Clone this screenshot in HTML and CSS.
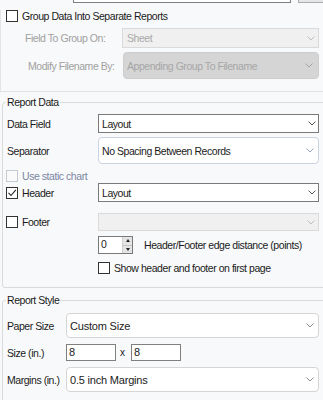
FILE: index.html
```html
<!DOCTYPE html>
<html>
<head>
<meta charset="utf-8">
<link rel="stylesheet" href="styles.css">
</head>
<body>
<div class="panel">
  <div class="top-row">
    <div class="top-input"></div>
    <div class="top-btn"></div>
  </div>

  <section class="group-sec">
    <div class="row chk-row">
      <span class="cb"></span><span class="txt">Group Data Into Separate Reports</span>
    </div>
    <div class="row field-row">
      <span class="dlabel lbl-field">Field To Group On:</span>
      <div class="combo disabled w-field">
        <span class="ctext">Sheet</span>
        <svg class="chev" width="8" height="5" viewBox="0 0 8 5"><polyline points="0.5,0.5 4,4 7.5,0.5"/></svg>
      </div>
    </div>
    <div class="row modify-row">
      <span class="dlabel lbl-modify">Modify Filename By:</span>
      <div class="combo grey w-modify">
        <span class="ctext">Appending Group To Filename</span>
        <svg class="chev" width="8" height="5" viewBox="0 0 8 5"><polyline points="0.5,0.5 4,4 7.5,0.5"/></svg>
      </div>
    </div>
  </section>

  <fieldset class="fs fs-data">
    <legend>Report Data</legend>
    <div class="row r-datafield">
      <span class="flabel w92">Data Field</span>
      <div class="combo dark w221">
        <span class="ctext">Layout</span>
        <svg class="chev" width="8" height="5" viewBox="0 0 8 5"><polyline points="0.5,0.5 4,4 7.5,0.5"/></svg>
      </div>
    </div>
    <div class="row r-separator">
      <span class="flabel w92">Separator</span>
      <div class="combo round blue w221">
        <span class="ctext">No Spacing Between Records</span>
        <svg class="chev" width="8" height="5" viewBox="0 0 8 5"><polyline points="0.5,0.5 4,4 7.5,0.5"/></svg>
      </div>
    </div>
    <div class="row r-static">
      <span class="cb cb-dis"></span><span class="txt txt-dis">Use static chart</span>
    </div>
    <div class="row r-header">
      <span class="chk-label w92"><span class="cb"><svg width="10" height="10" viewBox="0 0 10 10"><polyline class="tick" points="1.5,4.8 4,7.5 8.8,1.8"/></svg></span><span class="txt">Header</span></span>
      <div class="combo dark w221">
        <span class="ctext">Layout</span>
        <svg class="chev" width="8" height="5" viewBox="0 0 8 5"><polyline points="0.5,0.5 4,4 7.5,0.5"/></svg>
      </div>
    </div>
    <div class="row r-footer">
      <span class="chk-label w92"><span class="cb"></span><span class="txt">Footer</span></span>
      <div class="combo disabled w221">
        <span class="ctext"></span>
        <svg class="chev" width="8" height="5" viewBox="0 0 8 5"><polyline points="0.5,0.5 4,4 7.5,0.5"/></svg>
      </div>
    </div>
    <div class="row r-spin">
      <div class="spin">
        <span class="spin-val">0</span>
        <span class="spin-btns">
          <span class="spin-half"><span class="tri-up"></span></span>
          <span class="spin-half"><span class="tri-down"></span></span>
        </span>
      </div>
      <span class="txt spin-label">Header/Footer edge distance (points)</span>
    </div>
    <div class="row r-show">
      <span class="cb"></span><span class="txt">Show header and footer on first page</span>
    </div>
  </fieldset>

  <fieldset class="fs fs-style">
    <legend>Report Style</legend>
    <div class="row r-paper">
      <span class="flabel w60">Paper Size</span>
      <div class="combo round w253">
        <span class="ctext alt">Custom Size</span>
        <svg class="chev" width="8" height="5" viewBox="0 0 8 5"><polyline points="0.5,0.5 4,4 7.5,0.5"/></svg>
      </div>
    </div>
    <div class="row r-size">
      <span class="flabel w60">Size (in.)</span>
      <span class="tb">8</span>
      <span class="times">x</span>
      <span class="tb">8</span>
    </div>
    <div class="row r-margins">
      <span class="flabel w60">Margins (in.)</span>
      <div class="combo round w253">
        <span class="ctext alt">0.5 inch Margins</span>
        <svg class="chev" width="8" height="5" viewBox="0 0 8 5"><polyline points="0.5,0.5 4,4 7.5,0.5"/></svg>
      </div>
    </div>
  </fieldset>
</div>
</body>
</html>
```

FILE: styles.css
```css
* { box-sizing: border-box; }
html, body { margin: 0; padding: 0; }
body {
  width: 323px;
  height: 400px;
  overflow: hidden;
  background: #f8f9fa;
  font-family: "Liberation Sans", Arial, sans-serif;
  font-size: 10.5px;
  letter-spacing: -0.45px;
  color: #1b1b1b;
}
.panel { width: 323px; height: 400px; overflow: hidden; }

/* top clipped controls */
.top-row { display: flex; align-items: flex-end; height: 3px; overflow: hidden; }
.top-input { flex: none; margin-left: 73px; width: 218px; height: 20px; background: #fff; border: 1px solid #7f7f7f; }
.top-btn { flex: none; margin-left: 7px; width: 25px; height: 20px; background: #e6e6e6; border: 1px solid #adadad; border-right: none; }

.row { display: flex; align-items: center; }
.txt { line-height: 12px; white-space: nowrap; }

/* checkbox */
.cb {
  flex: none;
  width: 12px; height: 12px;
  border: 1px solid #333;
  background: #fff;
  margin-right: 4px;
  display: flex; align-items: center; justify-content: center;
}
.cb svg { display: block; }
.tick { fill: none; stroke: #222; stroke-width: 1.1; }
.cb-dis { border-color: #c6c9d0; background: #fafafa; }
.txt-dis { color: #7b86a3; }

/* group data section */
.group-sec { border-left: 1px solid #e4e4e4; border-bottom: 1px solid #e1e1e1; padding-bottom: 12px; }
.chk-row { margin: 7px 0 0 5px; height: 12px; }
.field-row { margin-top: 6px; height: 20px; }
.modify-row { margin-top: 4px; height: 27px; }
.dlabel { flex: none; color: #a0a0a0; white-space: nowrap; }
.lbl-field { width: 121px; padding-left: 24px; }
.lbl-modify { width: 122px; padding-left: 27px; }
.w-field { width: 197px; height: 20px; }
.w-modify { width: 196px; height: 27px; }

/* combos */
.combo {
  flex: none;
  display: flex; align-items: center; justify-content: space-between;
  padding: 0 3px 0 3px;
  background: #fff;
  height: 100%;
}
.ctext { white-space: nowrap; line-height: 14px; }
.ctext.alt { font-size: 11px; letter-spacing: -0.2px; color: #222; }
.chev { flex: none; display: block; fill: none; stroke: #555; stroke-width: 1; }
.combo.dark { border: 1px solid #7a7a7a; padding-right: 2px; }
.combo.round { border: 1px solid #d5d5d5; border-radius: 4px; padding-right: 4px; }
.combo.round .chev { stroke: #8e8e8e; }
.combo.round.blue { border-color: #cad2e3; }
.combo.round.blue .chev { stroke: #97a5c2; }
.combo.disabled { background: #f0f0f0; border: 1px solid #dadada; color: #a9a9a9; padding-left: 4px; }
.combo.disabled .chev { stroke: #bdbdbd; }
.combo.grey { background: #d5d5d5; border: 1px solid #cdcdcd; border-radius: 4px; color: #a6a6a6; padding-right: 5px; }
.combo.grey .chev { stroke: #a3a3a3; }

/* fieldsets */
.fs {
  min-width: 0;
  margin: 4px -20px 0 2px;
  border: 1px solid #dadada;
  border-radius: 3px;
  padding: 6px 0 13px 3px;
}
.fs legend { padding: 0 1px; margin-left: 0; line-height: 12px; height: 12px; }
.fs-style { margin-top: 6px; padding-top: 7px; }

.flabel { flex: none; padding-left: 1px; white-space: nowrap; }
.w92 { width: 92px; }
.w60 { width: 60px; }
.w221 { width: 221px; }
.w253 { width: 253px; }
.chk-label { flex: none; display: flex; align-items: center; }

.r-datafield { height: 19px; }
.r-separator { margin-top: 4px; height: 27px; }
.r-static { margin-top: 6px; height: 12px; }
.r-header { margin-top: 1px; height: 19px; }
.r-footer { margin-top: 11px; height: 18px; }
.r-spin { margin-top: 5px; height: 18px; padding-left: 92px; }
.r-show { margin-top: 8px; height: 12px; padding-left: 92px; }

/* spinner */
.spin { flex: none; display: flex; width: 35px; height: 18px; border: 1px solid #7a7a7a; background: #fff; }
.spin-val { flex: 1; padding-left: 2px; line-height: 15px; }
.spin-btns { flex: none; width: 10px; display: flex; flex-direction: column; background: #e4e4e4; border-left: 1px solid #d0d0d0; }
.spin-half { flex: 1; display: flex; align-items: center; justify-content: center; }
.spin-half + .spin-half { border-top: 1px solid #c4c4c4; }
.tri-up { width: 0; height: 0; border-left: 2.5px solid transparent; border-right: 2.5px solid transparent; border-bottom: 3px solid #222; }
.tri-down { width: 0; height: 0; border-left: 2.5px solid transparent; border-right: 2.5px solid transparent; border-top: 3px solid #222; }
.spin-label { margin-left: 11px; }

/* report style */
.r-paper { height: 25px; }
.r-size { margin-top: 6px; height: 17px; }
.r-margins { margin-top: 6px; height: 25px; }
.tb { flex: none; width: 50px; height: 17px; border: 1px solid #808080; background: #fff; padding-left: 2px; line-height: 15px; font-size: 11px; }
.times { flex: none; width: 15px; padding-left: 4px; font-size: 10px; }
```
